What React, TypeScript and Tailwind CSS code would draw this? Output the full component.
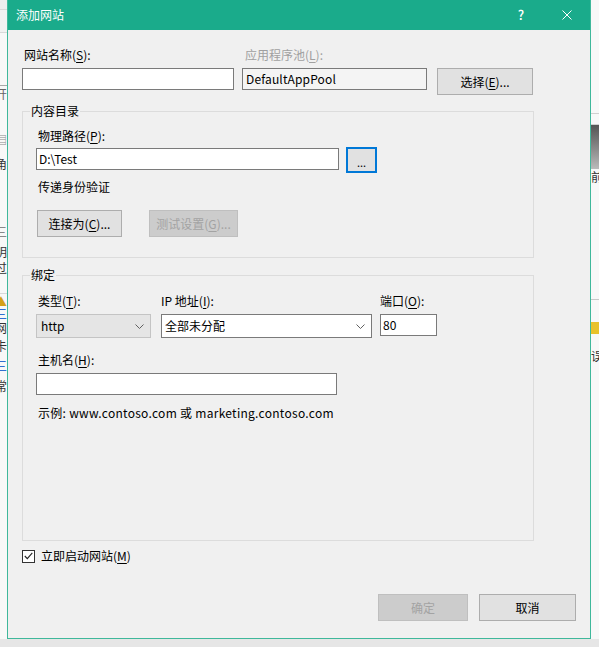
import React from 'react';

// 助记键：括号里带下划线的字母
const Mn = ({ k }: { k: string }) => (
  <>
    (<u className="underline-offset-2">{k}</u>)
  </>
);

interface BtnProps {
  children: React.ReactNode;
  className?: string;
  disabled?: boolean;
}

const Btn: React.FC<BtnProps> = ({ children, className = '', disabled = false }) => (
  <button
    disabled={disabled}
    className={`flex items-center justify-center border text-[12px] leading-[16px] ${
      disabled ? 'bg-[#cccccc] border-[#bfbfbf] text-[#a3a3a3]' : 'bg-[#e1e1e1] border-[#adadad] text-black'
    } ${className}`}
  >
    {children}
  </button>
);

const Chevron = () => (
  <svg width="9" height="5" viewBox="0 0 9 5" className="shrink-0">
    <polyline points="0.5,0.5 4.5,4.5 8.5,0.5" fill="none" stroke="#606060" strokeWidth="1" />
  </svg>
);

// 对话框后面露出的窗口边缘
const LeftStrip = () => (
  <div className="w-[7px] shrink-0 bg-[#f8f8f8] flex flex-col overflow-hidden text-[12px] leading-[16px] text-[#333]">
    <div className="h-[10px] bg-[#eeeeee] border-b border-[#d9d9d9]" />
    <div className="h-[23px] bg-[#f2f2f2] border-b border-[#d9d9d9]" />
    <div className="h-[52px]" />
    <div className="h-[1px] bg-[#a8a8a8]" />
    <div className="flex justify-end h-[20px] text-[#666]">开</div>
    <div className="h-[26px]" />
    <div className="flex justify-end h-[24px] text-[#888]">▤</div>
    <div className="flex justify-end h-[18px]">角</div>
    <div className="h-[50px]" />
    <div className="flex justify-end h-[20px] text-[#888]">三</div>
    <div className="flex justify-end h-[16px]">明</div>
    <div className="flex justify-end h-[16px]">过</div>
    <div className="h-[18px] border-b border-[#d9d9d9]" />
    <div className="flex justify-end h-[12px] text-[#d4a017]">▲</div>
    <div className="flex justify-end h-[14px] text-[#2f6fd0]">三</div>
    <div className="flex justify-end h-[18px]">网</div>
    <div className="flex justify-end h-[20px]">卡</div>
    <div className="flex justify-end h-[20px] text-[#2f6fd0]">三</div>
    <div className="flex justify-end h-[18px]">常</div>
  </div>
);

const RightStrip = () => (
  <div className="w-[8px] shrink-0 bg-[#f8f8f8] flex flex-col overflow-hidden text-[12px] leading-[16px] text-[#333]">
    <div className="h-[113px]" />
    <div className="h-[12px] border-y border-[#d0d0d0]" />
    <div className="h-[44px] bg-gradient-to-b from-[#555] to-[#bbb]" />
    <div className="h-[16px]">前</div>
    <div className="h-[115px] border-b border-[#c8c8c8]" />
    <div className="h-[22px]" />
    <div className="h-[12px] bg-[#e8c22a]" />
    <div className="h-[14px]" />
    <div className="h-[16px]">误</div>
  </div>
);

export default function App() {
  return (
    <div className="w-[599px] h-[647px] flex flex-col bg-[#e6e6e6] overflow-hidden font-['Noto_Sans_CJK_SC',sans-serif] text-[12px] leading-[16px] text-black">
      <div className="flex h-[639px]">
        <LeftStrip />

        <div className="w-[584px] shrink-0 flex flex-col border-x border-b border-[#3fb89b] bg-[#f0f0f0]">
          {/* 标题栏 */}
          <div className="h-[30px] shrink-0 bg-[#1aab8b] flex items-center text-white">
            <span className="pl-[8px] flex-1">添加网站</span>
            <span className="w-[46px] h-[30px] flex items-center justify-center text-[13px] font-medium">?</span>
            <span className="w-[46px] h-[30px] flex items-center justify-center">
              <svg width="10" height="10" viewBox="0 0 10 10">
                <path d="M0.5 0.5L9.5 9.5M9.5 0.5L0.5 9.5" stroke="white" strokeWidth="1" />
              </svg>
            </span>
          </div>

          <div className="flex-1 flex flex-col pl-[14px] pt-[17px]">
            {/* 网站名称 / 应用程序池 */}
            <div className="flex items-start">
              <div className="w-[212px] flex flex-col">
                <label className="ml-[2px] h-[16px]">
                  网站名称<Mn k="S" />:
                </label>
                <div className="mt-[5px] h-[22px] border border-[#7a7a7a] bg-white" />
              </div>
              <div className="ml-[8px] w-[185px] flex flex-col">
                <label className="ml-[3px] h-[16px] text-[#a0a0a0]">
                  应用程序池<Mn k="L" />:
                </label>
                <div className="mt-[5px] h-[22px] border border-[#7a7a7a] bg-[#f4f4f4] flex items-center pl-[3px] tracking-[0.15px]">
                  DefaultAppPool
                </div>
              </div>
              <Btn className="ml-[10px] mt-[21px] w-[96px] h-[27px]">
                选择<Mn k="E" />...
              </Btn>
            </div>

            {/* 内容目录 */}
            <fieldset className="mt-[8px] w-[512px] border border-[#dcdcdc] pb-[20px]">
              <legend className="ml-[7px] px-[1px] h-[16px]">内容目录</legend>
              <div className="pl-[13px] flex flex-col">
                <label className="mt-[9px] ml-[2px] h-[16px]">
                  物理路径<Mn k="P" />:
                </label>
                <div className="mt-[3px] flex items-start h-[26px]">
                  <div className="mt-[1px] w-[303px] h-[22px] border border-[#7a7a7a] bg-white flex items-center pl-[2px]">
                    D:\Test
                  </div>
                  <button className="ml-[7px] w-[31px] h-[26px] border-2 border-[#0078d7] bg-[#e1e1e1] flex items-center justify-center pt-[3px] text-[11px] leading-[12px]">
                    ...
                  </button>
                </div>
                <div className="mt-[6px] ml-[2px] h-[16px]">传递身份验证</div>
                <div className="mt-[15px] flex">
                  <Btn className="ml-[1px] w-[85px] h-[27px]">
                    连接为<Mn k="C" />...
                  </Btn>
                  <Btn disabled className="ml-[27px] w-[89px] h-[27px]">
                    测试设置<Mn k="G" />...
                  </Btn>
                </div>
              </div>
            </fieldset>

            {/* 绑定 */}
            <fieldset className="mt-[9px] w-[512px] h-[274px] border border-[#dcdcdc]">
              <legend className="ml-[7px] px-[1px] h-[16px]">绑定</legend>
              <div className="pl-[13px] flex flex-col">
                <div className="mt-[10px] flex items-start">
                  <div className="w-[115px] flex flex-col">
                    <label className="ml-[2px] h-[16px]">
                      类型<Mn k="T" />:
                    </label>
                    <div className="mt-[5px] h-[24px] border border-[#c4c4c4] bg-[#e5e5e5] flex items-center justify-between pl-[4px] pr-[6px]">
                      <span>http</span>
                      <Chevron />
                    </div>
                  </div>
                  <div className="ml-[10px] w-[211px] flex flex-col">
                    <label className="h-[16px]">
                      IP 地址<Mn k="I" />:
                    </label>
                    <div className="mt-[5px] h-[24px] border border-[#7a7a7a] bg-white flex items-center justify-between pl-[3px] pr-[6px]">
                      <span>全部未分配</span>
                      <Chevron />
                    </div>
                  </div>
                  <div className="ml-[8px] w-[57px] flex flex-col">
                    <label className="h-[16px]">
                      端口<Mn k="O" />:
                    </label>
                    <div className="mt-[5px] h-[22px] border border-[#7a7a7a] bg-white flex items-center pl-[2px]">
                      80
                    </div>
                  </div>
                </div>
                <label className="mt-[14px] ml-[2px] h-[16px]">
                  主机名<Mn k="H" />:
                </label>
                <div className="mt-[5px] w-[301px] h-[22px] border border-[#7a7a7a] bg-white" />
                <div className="mt-[10px] ml-[2px] h-[16px] tracking-[0.28px]">
                  示例: www.contoso.com 或 marketing.contoso.com
                </div>
              </div>
            </fieldset>

            {/* 立即启动 */}
            <div className="mt-[7px] h-[16px] flex items-center">
              <span className="w-[13px] h-[13px] border border-[#333333] bg-white flex items-center justify-center">
                <svg width="9" height="8" viewBox="0 0 9 8">
                  <polyline points="0.8,4 3.3,6.6 8.3,0.8" fill="none" stroke="#222" strokeWidth="1.1" />
                </svg>
              </span>
              <span className="ml-[6px]">
                立即启动网站<Mn k="M" />
              </span>
            </div>

            {/* 确定 / 取消 */}
            <div className="mt-[30px] flex justify-end pr-[14px]">
              <Btn disabled className="w-[90px] h-[27px]">
                确定
              </Btn>
              <Btn className="ml-[11px] w-[97px] h-[27px]">取消</Btn>
            </div>
          </div>
        </div>

        <RightStrip />
      </div>
    </div>
  );
}
